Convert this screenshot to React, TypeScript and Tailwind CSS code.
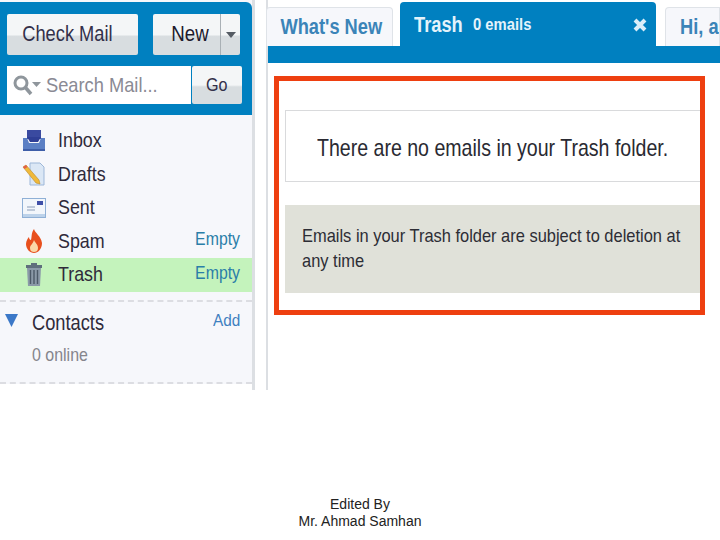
const Inbox = () => (
  <svg width="24" height="24" viewBox="0 0 24 24" className="shrink-0">
    <rect x="5" y="1" width="14" height="9" fill="#3a4aa0" />
    <path d="M1 9h4l2 5h10l2-5h4v13H1z" fill="#5b7fc4" />
    <path d="M5 8h14l-3 5H8z" fill="#2f3f96" />
    <path d="M1 20h22v2H1z" fill="#3e5ea8" />
  </svg>
);
const Drafts = () => (
  <svg width="24" height="24" viewBox="0 0 24 24" className="shrink-0">
    <path d="M8 1h10l4 4v18H8z" fill="#dbe7f5" stroke="#9db7d8" />
    <path d="M1 5l3-2 13 15 1 4-4-1z" fill="#f0b93a" stroke="#b98a2a" strokeWidth="0.6" />
    <path d="M1 5l3-2 1.500 2-3 2z" fill="#e2604a" />
  </svg>
);
const Sent = () => (
  <svg width="24" height="20" viewBox="0 0 24 20" className="shrink-0">
    <rect x="0.5" y="0.5" width="23" height="19" fill="#f2f6fb" stroke="#8fb0d6" />
    <rect x="15" y="3" width="6" height="4" fill="#3f4fa8" />
    <path d="M5 9h8M5 12h8" stroke="#8a9cb8" strokeWidth="1" />
    <path d="M1 16h22v3H1z" fill="#bcd2ea" />
  </svg>
);
const Flame = () => (
  <svg width="18" height="24" viewBox="0 0 18 24" className="shrink-0">
    <path d="M9 0c1 4 7 7 8 14 0 6-4 10-8 10s-8-4-8-9c0-3 2-6 3-7 0 2 1 3 2 3 1-3 0-7 3-11z" fill="#e8501e" />
    <path d="M9 11c1 3 4 4 4 8 0 3-2 4-4 4s-4-1-4-4c0-3 3-4 4-8z" fill="#fbd9a8" />
  </svg>
);
const Bin = () => (
  <svg width="20" height="24" viewBox="0 0 20 24" className="shrink-0">
    <path d="M7 0h6v2h5v3H2V2h5z" fill="#5f6f7c" />
    <path d="M3 5h14l-1 18H4z" fill="#8b9aa8" />
    <path d="M6.500 7v14M10 7v14M13.500 7v14" stroke="#4c5a68" strokeWidth="1.400" />
  </svg>
);

const Row = ({ icon, label, action, active }: { icon: React.ReactNode; label: string; action?: string; active?: boolean }) => (
  <div className={`flex h-[33.5px] items-center pr-3 ${active ? "bg-[#c4f3bc]" : ""}`}>
    <div className="flex w-[58px] shrink-0 justify-end pr-[11px]">
      <div className="flex w-[26px] justify-center">{icon}</div>
    </div>
    <span className="inline-block origin-left scale-x-[.85] whitespace-nowrap pb-[2px] text-[21px] text-[#2f2a3a]">{label}</span>
    {action && <span className="ml-auto inline-block origin-right scale-x-[.88] whitespace-nowrap pb-[3px] text-[18px] text-[#2a7ea8]">{action}</span>}
  </div>
);

const Btn = ({ className, children }: { className: string; children: React.ReactNode }) => (
  <div className={`flex items-center justify-center rounded-[2px] bg-[linear-gradient(#f4f6f7_0%,#f4f6f7_50%,#d8dde0_55%,#d8dde0_100%)] ${className}`}>
    {children}
  </div>
);

export default function App() {
  return (
    <div className="flex h-[540px] w-[720px] flex-col overflow-hidden bg-white font-['Liberation_Sans',sans-serif]">
      <div className="flex h-[390px] shrink-0">
        <aside className="flex h-full w-[255px] shrink-0 flex-col border-r-[3px] border-[#dcdfe3] bg-[#f6f7fb] pt-[2px]">
          <div className="h-[113px] shrink-0 rounded-tr-[6px] bg-[#0080c0] px-[7px] pt-[12px]">
            <div className="flex">
              <Btn className="h-[41px] w-[131px] pr-[10px] pb-[2px] text-[22px] text-[#33304a]">
                <span className="inline-block scale-x-[.83] whitespace-nowrap">Check Mail</span>
              </Btn>
              <Btn className="ml-[15px] h-[41px] w-[87px] text-[22px] text-[#1d1a2c]">
                <span className="flex-1 pl-[8px] pb-[2px] text-center"><span className="inline-block scale-x-[.85]">New</span></span>
                <span className="flex h-full w-[20px] items-center justify-center border-l border-[#a9b0b5]">
                  <svg width="10" height="6" viewBox="0 0 10 6"><path d="M0 0h10L5 6z" fill="#555c64" /></svg>
                </span>
              </Btn>
            </div>
            <div className="mt-[11px] flex h-[38px] w-[235px]">
              <div className="flex w-[184px] items-center overflow-hidden bg-white pl-[5px] text-[#8a8a94]">
                <svg width="30" height="22" viewBox="0 0 30 22" className="shrink-0">
                  <circle cx="9" cy="9" r="6" fill="none" stroke="#8f969c" strokeWidth="3" />
                  <path d="M13 13l6 7" stroke="#8f969c" strokeWidth="3.500" />
                  <path d="M20 8h9l-4.500 5z" fill="#8f969c" />
                </svg>
                <span className="ml-[4px] inline-block origin-left scale-x-[.87] whitespace-nowrap text-[21px]">Search Mail...</span>
              </div>
              <Btn className="ml-[1px] flex-1 text-[19px] text-[#33304a]">
                <span className="inline-block scale-x-[.85]">Go</span>
              </Btn>
            </div>
          </div>
          <div className="pt-[9px]">
            <Row icon={<Inbox />} label="Inbox" />
            <Row icon={<Drafts />} label="Drafts" />
            <Row icon={<Sent />} label="Sent" />
            <Row icon={<Flame />} label="Spam" action="Empty" />
            <Row icon={<Bin />} label="Trash" action="Empty" active />
          </div>
          <div className="mt-[8px] border-t-2 border-dashed border-[#dcdde2]" />
          <div className="mt-[8px] flex h-[26px] items-center pl-[5px] pr-3">
            <svg width="14" height="14" viewBox="0 0 14 14" className="mb-[6px] shrink-0"><path d="M0 1h13L6.500 14z" fill="#3b78c8" /></svg>
            <span className="ml-[13px] inline-block origin-left scale-x-[.83] whitespace-nowrap text-[22px] text-[#2f2a3a]">Contacts</span>
            <span className="mb-[3px] ml-auto inline-block origin-right scale-x-[.9] text-[17px] text-[#3f80c0]">Add</span>
          </div>
          <div className="mt-[8px] h-[22px] pl-[32px] text-[19px] leading-[22px] text-[#85858c]">
            <span className="inline-block origin-left scale-x-[.84] whitespace-nowrap">0 online</span>
          </div>
          <div className="mt-[16px] border-t-2 border-dashed border-[#dcdde2]" />
          <div className="flex-1 bg-white" />
        </aside>
        <main className="ml-[11px] flex min-w-0 flex-1 flex-col border-l-2 border-[#dcdfe3]">
          <div className="flex h-[46px] shrink-0 items-end">
            <div className="-ml-[2px] flex h-[39px] w-[127px] items-center justify-center rounded-t-[4px] border border-b-0 border-[#dfe3e8] bg-[#f6f7fb] pb-[2px] pl-[3px] text-[22px] font-bold text-[#3b84b8]">
              <span className="inline-block scale-x-[.83] whitespace-nowrap">What's New</span>
            </div>
            <div className="ml-[7px] flex h-[44px] w-[256px] items-center rounded-t-[4px] bg-[#0080c0] pl-[14px] pr-[9px] text-[#e4f3fb]">
              <span className="inline-block origin-left scale-x-[.83] text-[22px] font-bold">Trash</span>
              <span className="ml-0 mt-[2px] inline-block origin-left scale-x-[.87] whitespace-nowrap text-[17px] font-bold">0 emails</span>
              <svg width="14" height="14" viewBox="0 0 14 14" className="ml-auto mt-[2px]"><path d="M2 2l10 10M12 2L2 12" stroke="#d9eef9" strokeWidth="4" /></svg>
            </div>
            <div className="ml-[9px] flex h-[39px] flex-1 items-center overflow-hidden whitespace-nowrap rounded-tl-[4px] border border-b-0 border-[#dfe3e8] bg-[#f6f7fb] pb-[2px] pl-[14px] text-[22px] font-bold text-[#3b84b8]">
              <span className="inline-block origin-left scale-x-[.83]">Hi, ar</span>
            </div>
          </div>
          <div className="h-[17px] shrink-0 bg-[#0080c0]" />
          <div className="mt-[13px] ml-[6px] flex h-[239px] w-[431px] flex-col border-[5px] border-[#ee3f10] pt-[29px] pl-[6px]">
            <div className="flex h-[72px] w-[415px] shrink-0 items-center whitespace-nowrap border border-r-0 border-[#d9dadc] pl-[31px] pt-[3px] text-[24px] text-[#2a2a32]">
              <span className="inline-block origin-left scale-x-[.815]">There are no emails in your Trash folder.</span>
            </div>
            <div className="mt-[23px] flex h-[88px] w-[415px] shrink-0 flex-col justify-center overflow-hidden whitespace-nowrap bg-[#e0e1d9] pb-[2px] pl-[17px] text-[19px] leading-[25px] text-[#2d2d35]">
              <div className="origin-left scale-x-[.865]">Emails in your Trash folder are subject to deletion at</div>
              <div className="origin-left scale-x-[.865]">any time</div>
            </div>
          </div>
        </main>
      </div>
      <div className="flex-1 pt-[106px] text-center text-[14px] leading-[17px] text-[#222]">
        <div>Edited By</div>
        <div>Mr. Ahmad Samhan</div>
      </div>
    </div>
  );
}
